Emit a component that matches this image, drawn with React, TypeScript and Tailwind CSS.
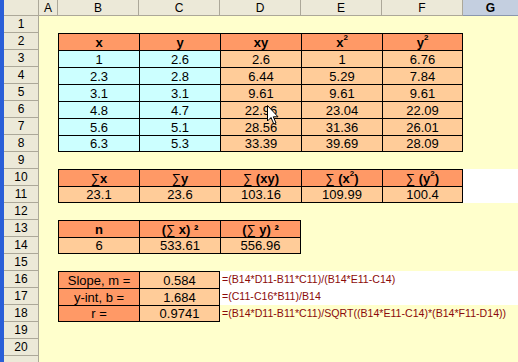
import type { ReactNode } from "react";

const cols = ["A", "B", "C", "D", "E", "F"];

const hd = "bg-[#ff9966] font-bold";
const lo = "bg-[#ffcc99]";
const cy = "bg-[#ccffff]";

type Cell = { v: ReactNode; c: string } | null;

function Sig() {
  return <span className="font-normal">∑</span>;
}

function Sq({ children }: { children: ReactNode }) {
  return (
    <>
      {children}
      <span className="relative -top-1 text-[8px]">2</span>
    </>
  );
}

function Wavy({ children }: { children: ReactNode }) {
  return (
    <span className="underline decoration-[#e03030] decoration-wavy decoration-1 underline-offset-2">
      {children}
    </span>
  );
}

// rows 1..21, cells for B..F
const table: Record<number, Cell[]> = {
  2: [
    { v: "x", c: hd },
    { v: "y", c: hd },
    { v: <Wavy>xy</Wavy>, c: hd },
    { v: <Sq>x</Sq>, c: hd },
    { v: <Sq>y</Sq>, c: hd },
  ],
  3: [{ v: "1", c: cy }, { v: "2.6", c: cy }, { v: "2.6", c: lo }, { v: "1", c: lo }, { v: "6.76", c: lo }],
  4: [{ v: "2.3", c: cy }, { v: "2.8", c: cy }, { v: "6.44", c: lo }, { v: "5.29", c: lo }, { v: "7.84", c: lo }],
  5: [{ v: "3.1", c: cy }, { v: "3.1", c: cy }, { v: "9.61", c: lo }, { v: "9.61", c: lo }, { v: "9.61", c: lo }],
  6: [{ v: "4.8", c: cy }, { v: "4.7", c: cy }, { v: "22.96", c: lo }, { v: "23.04", c: lo }, { v: "22.09", c: lo }],
  7: [{ v: "5.6", c: cy }, { v: "5.1", c: cy }, { v: "28.56", c: lo }, { v: "31.36", c: lo }, { v: "26.01", c: lo }],
  8: [{ v: "6.3", c: cy }, { v: "5.3", c: cy }, { v: "33.39", c: lo }, { v: "39.69", c: lo }, { v: "28.09", c: lo }],
  10: [
    { v: <><Sig />x</>, c: hd },
    { v: <><Sig />y</>, c: hd },
    { v: <><Sig />{"\u00a0("}<Wavy>xy</Wavy>)</>, c: hd },
    { v: <><Sig />{"\u00a0("}<Sq>x</Sq>)</>, c: hd },
    { v: <><Sig />{"\u00a0("}<Sq>y</Sq>)</>, c: hd },
  ],
  11: [{ v: "23.1", c: lo }, { v: "23.6", c: lo }, { v: "103.16", c: lo }, { v: "109.99", c: lo }, { v: "100.4", c: lo }],
  13: [
    { v: "n", c: hd },
    { v: <>(<Sig />{"\u00a0x)\u00a0²"}</>, c: hd },
    { v: <>(<Sig />{"\u00a0y)\u00a0²"}</>, c: hd },
    null,
    null,
  ],
  14: [{ v: "6", c: lo }, { v: "533.61", c: lo }, { v: "556.96", c: lo }, null, null],
  16: [{ v: "Slope, m =", c: "bg-[#ff9966]" }, { v: "0.584", c: lo }],
  17: [{ v: "y-int, b =", c: "bg-[#ff9966]" }, { v: "1.684", c: lo }],
  18: [{ v: "r =", c: "bg-[#ff9966]" }, { v: "0.9741", c: lo }],
};

const formulas: Record<number, { text: string; bg: string }> = {
  16: { text: "=(B14*D11-B11*C11)/(B14*E11-C14)", bg: "bg-white" },
  17: { text: "=(C11-C16*B11)/B14", bg: "bg-white" },
  18: { text: "=(B14*D11-B11*C11)/SQRT((B14*E11-C14)*(B14*F11-D14))", bg: "" },
};

const whiteG = new Set([10, 11]);

function has(r: number, i: number) {
  return !!table[r]?.[i];
}

export default function App() {
  const rows = Array.from({ length: 21 }, (_, i) => i + 1);

  return (
    <div className="relative flex h-[362px] w-[518px] overflow-hidden bg-[#ffffcc] font-['Liberation_Sans',Arial,sans-serif] text-black">
      <div className="w-1 shrink-0 bg-[#2a5fd8]" />
      <div className="grid flex-1 grid-cols-[35px_19px_81px_81px_81px_81px_81px_1fr] grid-rows-[16px_repeat(21,17px)]">
        {/* column headers */}
        <div className="border-b border-r border-[#aca899] bg-[#ece9d8]" />
        {cols.map((c) => (
          <div
            key={c}
            className="flex items-center justify-center border-b border-r border-[#aca899] bg-[#ece9d8] text-[12px]"
          >
            {c}
          </div>
        ))}
        <div className="flex items-center justify-center border-b border-[#8a97ae] bg-[#c4cfe0] text-[12px] font-bold">
          G
        </div>

        {rows.map((r) => {
          const cells = table[r] ?? [];
          const f = formulas[r];
          return [
            <div
              key={`h${r}`}
              className="flex items-center justify-center border-b border-r border-[#aca899] bg-[#ece9d8] text-[12px]"
            >
              {r < 21 ? r : null}
            </div>,
            <div key={`a${r}`} />,
            ...[0, 1, 2, 3, 4].map((i) => {
              if (f && i >= 2) return null;
              const cell = cells[i];
              if (!cell) return <div key={`c${r}${i}`} />;
              const last = !has(r + 1, i);
              const right = !has(r, i + 1) || (f && i === 1);
              return (
                <div
                  key={`c${r}${i}`}
                  className={`flex items-center justify-center whitespace-nowrap border-l border-t border-black text-[13px] leading-none ${
                    last ? "border-b" : ""
                  } ${right ? "border-r" : ""} ${cell.c}`}
                >
                  {cell.v}
                </div>
              );
            }),
            f ? (
              <div
                key={`f${r}`}
                className={`col-span-4 flex items-center whitespace-nowrap pl-[2px] text-[10.6px] text-[#8b0a0a] ${f.bg}`}
              >
                {f.text}
              </div>
            ) : (
              <div key={`g${r}`} className={whiteG.has(r) ? "bg-white" : ""} />
            ),
          ];
        })}
      </div>

      <svg
        className="absolute left-[267px] top-[105px]"
        width="13"
        height="21"
        viewBox="0 0 13 21"
      >
        <path
          d="M0.5 0.5 L0.5 16 L4 12.5 L6.8 19 L9 18 L6.3 11.8 L11 11.8 Z"
          fill="white"
          stroke="black"
          strokeWidth="1"
          strokeLinejoin="miter"
        />
      </svg>
    </div>
  );
}
